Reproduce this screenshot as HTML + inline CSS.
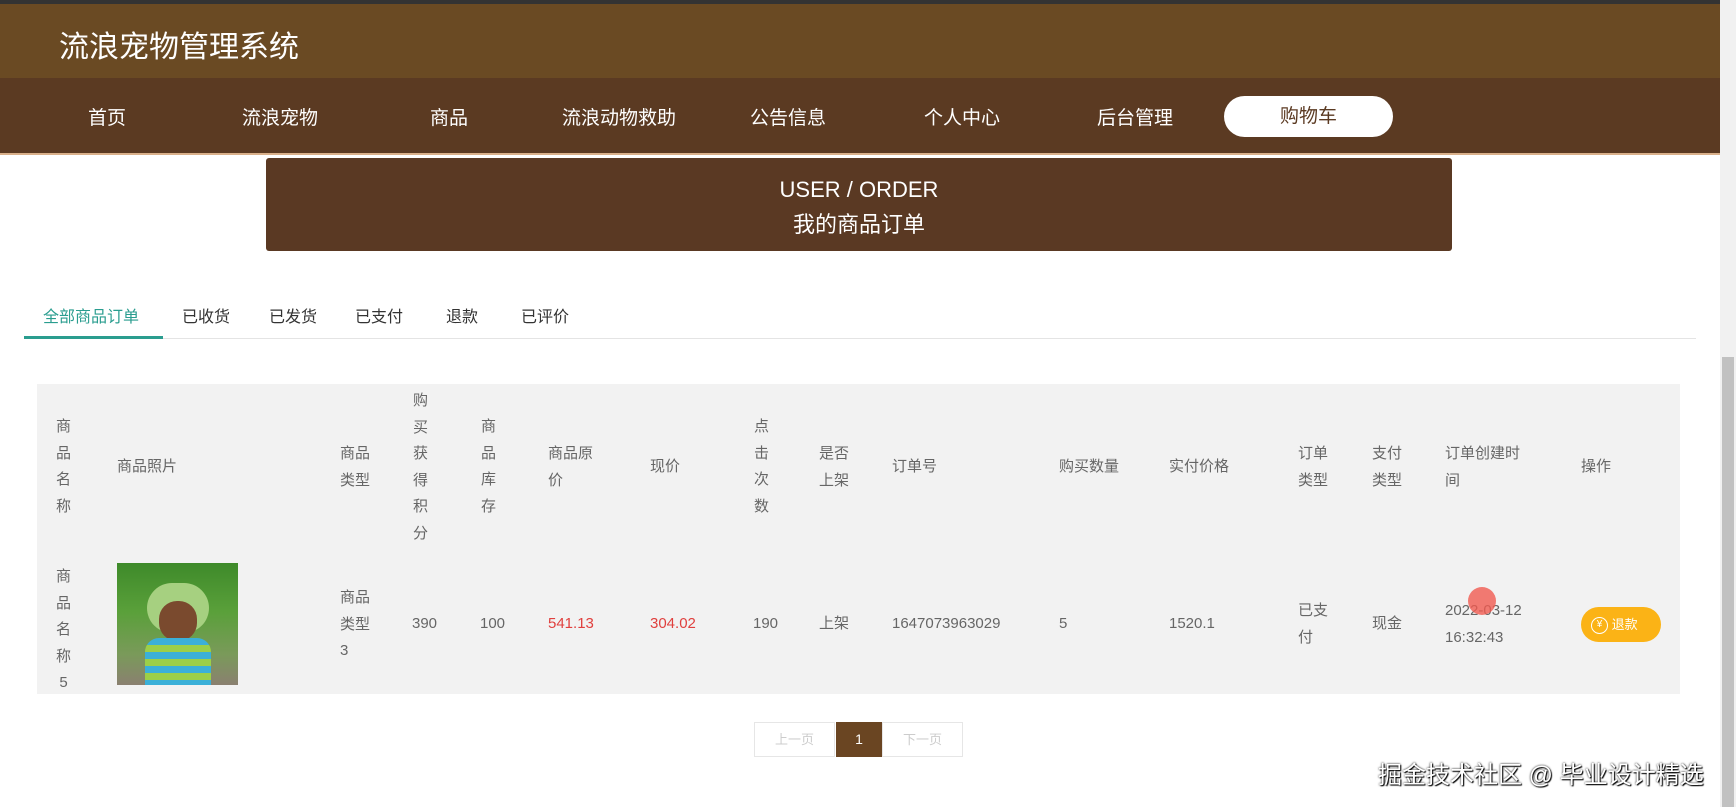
<!DOCTYPE html>
<html><head><meta charset="utf-8"><style>
*{margin:0;padding:0;box-sizing:border-box}
body{width:1736px;height:807px;overflow:hidden;background:#fff;position:relative;font-family:"Liberation Sans","Noto Sans CJK SC",sans-serif;color:#666}
.a{position:absolute;white-space:nowrap}
.top{left:0;top:0;width:1720px;height:4px;background:#333}
.hd{left:0;top:4px;width:1720px;height:74px;background:#6a4a23}
.nav{left:0;top:78px;width:1720px;height:77px;background:#5b3a22;border-bottom:2px solid #d9b08a}
.ni{color:#fff;font-size:19px;top:103px;transform:translateX(-50%)}
.sb{left:1720px;top:0;width:16px;height:807px;background:#f1f1f1}
.th{left:1722px;top:357px;width:12px;height:450px;background:#c1c1c1}
.tab{top:303px;font-size:16px;color:#333}
.c{font-size:15px;color:#666;line-height:26.5px}
.v{width:17px;white-space:normal;text-align:center}
</style></head><body>
<div class="a top"></div>
<div class="a hd"></div>
<div class="a" style="left:59px;top:22px;font-size:30px;color:#fff">流浪宠物管理系统</div>
<div class="a nav"></div>
<div class="a ni" style="left:107px">首页</div>
<div class="a ni" style="left:280px">流浪宠物</div>
<div class="a ni" style="left:449px">商品</div>
<div class="a ni" style="left:619px">流浪动物救助</div>
<div class="a ni" style="left:788px">公告信息</div>
<div class="a ni" style="left:962px">个人中心</div>
<div class="a ni" style="left:1135px">后台管理</div>
<div class="a" style="left:1224px;top:96px;width:169px;height:41px;border-radius:21px;background:#fff;color:#5b3a22;font-size:19px;text-align:center;line-height:41px">购物车</div>
<div class="a sb"></div><div class="a th"></div>
<div class="a" style="left:266px;top:158px;width:1186px;height:93px;background:#5a3923;border-radius:3px;color:#fff;text-align:center;font-size:22px;line-height:35px;padding-top:14px">USER / ORDER<br>我的商品订单</div>

<div class="a tab" style="left:43px;color:#2a9d8f">全部商品订单</div>
<div class="a tab" style="left:182px">已收货</div>
<div class="a tab" style="left:269px">已发货</div>
<div class="a tab" style="left:355px">已支付</div>
<div class="a tab" style="left:446px">退款</div>
<div class="a tab" style="left:521px">已评价</div>
<div class="a" style="left:24px;top:338px;width:1672px;height:1px;background:#e4e4e4"></div>
<div class="a" style="left:24px;top:336px;width:139px;height:3px;background:#2a9d8f"></div>

<div class="a" style="left:37px;top:384px;width:1643px;height:310px;background:#f2f2f2"></div>
<!-- header -->
<div class="a c v" style="left:55px;top:414px">商品名称</div>
<div class="a c" style="left:117px;top:454px">商品照片</div>
<div class="a c" style="left:340px;top:441px;width:34px;white-space:normal">商品类型</div>
<div class="a c v" style="left:412px;top:388px">购买获得积分</div>
<div class="a c v" style="left:480px;top:414px">商品库存</div>
<div class="a c" style="left:548px;top:441px;width:52px;white-space:normal">商品原价</div>
<div class="a c" style="left:650px;top:454px">现价</div>
<div class="a c v" style="left:753px;top:414px">点击次数</div>
<div class="a c" style="left:819px;top:441px;width:34px;white-space:normal">是否上架</div>
<div class="a c" style="left:892px;top:454px">订单号</div>
<div class="a c" style="left:1059px;top:454px">购买数量</div>
<div class="a c" style="left:1169px;top:454px">实付价格</div>
<div class="a c" style="left:1298px;top:441px;width:34px;white-space:normal">订单类型</div>
<div class="a c" style="left:1372px;top:441px;width:34px;white-space:normal">支付类型</div>
<div class="a c" style="left:1445px;top:441px;width:88px;white-space:normal">订单创建时间</div>
<div class="a c" style="left:1581px;top:454px">操作</div>
<!-- row -->
<div class="a c v" style="left:55px;top:564px">商品名称5</div>
<div class="a" style="left:117px;top:563px;width:121px;height:122px;background:linear-gradient(#3e8a2a,#5aa03a 40%,#7a9a5a 75%,#8a8070);overflow:hidden">
<div style="position:absolute;left:30px;top:20px;width:62px;height:50px;border-radius:30px;background:#a6d080"></div>
<div style="position:absolute;left:42px;top:38px;width:38px;height:40px;border-radius:18px;background:#7a4a2e"></div>
<div style="position:absolute;left:28px;top:75px;width:66px;height:47px;border-radius:14px 14px 0 0;background:repeating-linear-gradient(#3bb0d8 0 7px,#9ccf48 7px 14px)"></div>
</div>
<div class="a c" style="left:340px;top:585px;width:34px;white-space:normal">商品类型3</div>
<div class="a c" style="left:412px;top:611px">390</div>
<div class="a c" style="left:480px;top:611px">100</div>
<div class="a c" style="left:548px;top:611px;color:#e0403e">541.13</div>
<div class="a c" style="left:650px;top:611px;color:#e0403e">304.02</div>
<div class="a c" style="left:753px;top:611px">190</div>
<div class="a c" style="left:819px;top:611px">上架</div>
<div class="a c" style="left:892px;top:611px">1647073963029</div>
<div class="a c" style="left:1059px;top:611px">5</div>
<div class="a c" style="left:1169px;top:611px">1520.1</div>
<div class="a c" style="left:1298px;top:598px;width:34px;white-space:normal">已支付</div>
<div class="a c" style="left:1372px;top:611px">现金</div>
<div class="a c" style="left:1445px;top:598px;width:90px;white-space:normal">2022-03-12 16:32:43</div>
<div class="a" style="left:1468px;top:587px;width:28px;height:28px;border-radius:50%;background:rgba(240,90,80,.8)"></div>
<div class="a" style="left:1581px;top:607px;width:80px;height:35px;border-radius:18px;background:#fbb316;color:#fff;font-size:13px;line-height:35px;padding-left:10px"><span style="display:inline-block;width:17px;height:17px;border:1.5px solid #fff;border-radius:50%;font-size:10px;line-height:14px;text-align:center;vertical-align:middle">¥</span> 退款</div>

<div class="a" style="left:754px;top:722px;width:81px;height:35px;border:1px solid #e6e6e6;color:#ccc;font-size:13px;text-align:center;line-height:33px">上一页</div>
<div class="a" style="left:836px;top:722px;width:46px;height:35px;background:#6a4522;color:#fff;font-size:14px;text-align:center;line-height:35px">1</div>
<div class="a" style="left:882px;top:722px;width:81px;height:35px;border:1px solid #e6e6e6;color:#ccc;font-size:13px;text-align:center;line-height:33px">下一页</div>
<div class="a" style="left:1378px;top:755px;font-size:24px;color:#fff;text-shadow:0 0 2px #000,1px 1px 1px #000">掘金技术社区 @ 毕业设计精选</div>
</body></html>
